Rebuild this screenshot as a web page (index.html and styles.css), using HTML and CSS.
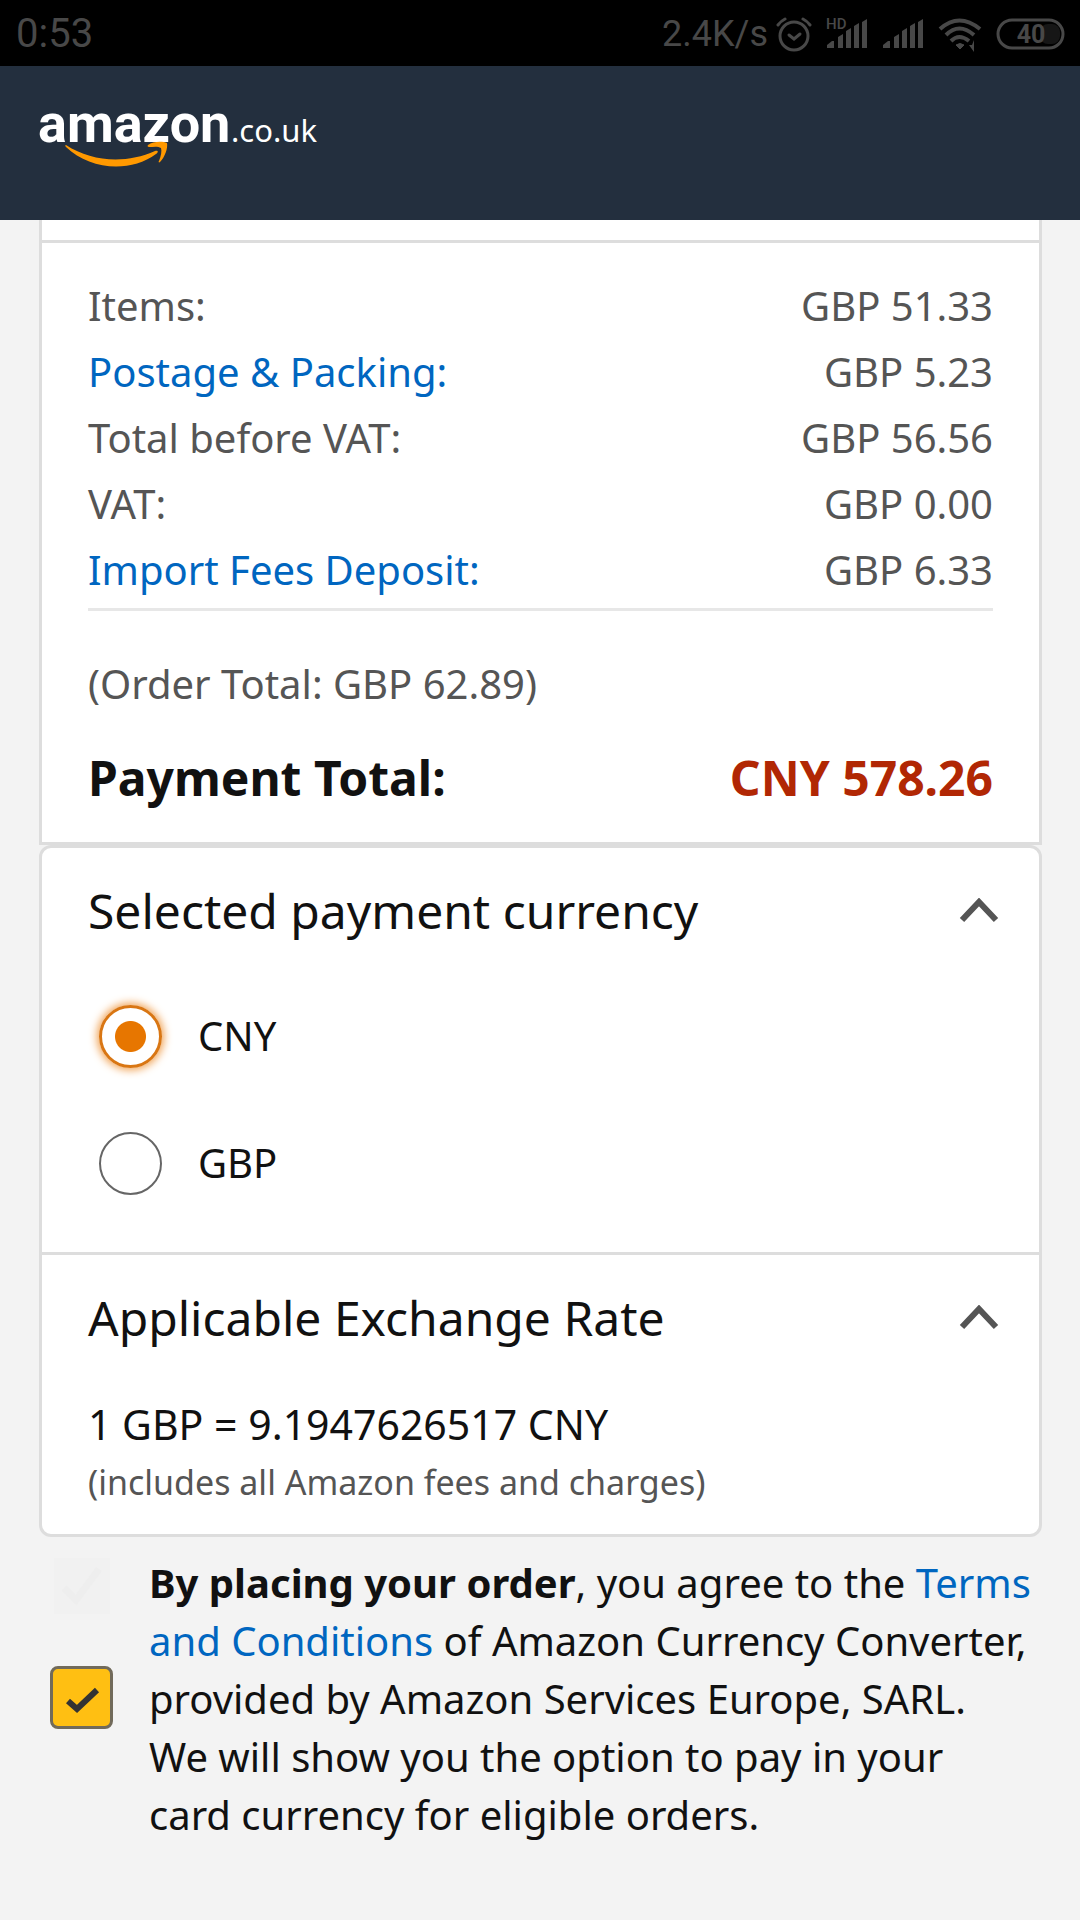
FILE: index.html
```html
<!DOCTYPE html>
<html lang="en">
<head>
<meta charset="utf-8">
<meta name="viewport" content="width=device-width, initial-scale=1">
<title>Amazon.co.uk Checkout</title>
<link rel="stylesheet" href="styles.css">
</head>
<body>
<div class="status-bar">
  <span class="clock">0:53</span>
  <div class="status-icons">
    <span class="speed">2.4K/s</span>
    <svg class="status-icon" width="36" height="36" viewBox="0 0 36 36" fill="none" stroke="currentColor" stroke-linecap="round" aria-label="Alarm">
      <circle cx="18" cy="20" r="14" stroke-width="3"/>
      <path d="M13 19l5 4 6-5" stroke-width="3"/>
      <path d="M2 9q3-4 7-6M27 3q4 2 7 6" stroke-width="3"/>
    </svg>
    <svg class="status-icon hd-signal" width="42" height="36" viewBox="0 0 42 36" fill="currentColor" aria-label="HD signal">
      <text class="hd-text" x="0" y="13">HD</text>
      <path d="M1 32v-3l5-4h2v7zM12 32V21l5-3v14zM20 32V15l5-3v20zM28 32V10l5-3v25zM36 32V6l5-3v29z"/>
    </svg>
    <svg class="status-icon" width="42" height="36" viewBox="0 0 42 36" fill="currentColor" aria-label="Signal">
      <path d="M1 32v-3l5-4h2v7zM12 32V21l5-3v14zM20 32V15l5-3v20zM28 32V10l5-3v25zM36 32V6l5-3v29z"/>
    </svg>
    <svg class="status-icon wifi" width="44" height="36" viewBox="0 0 44 36" fill="none" stroke="currentColor" stroke-width="4" aria-label="Wi-Fi">
      <path d="M2 13q19-17 40 0M8 19q13-13 28 0M13 25q8-8 18 0"/>
      <path d="M18 29q4-3 8 0l-4 4z" fill="currentColor" stroke-width="1"/>
      <path d="M31 29h3l2-5v12z" fill="currentColor" stroke="none"/>
    </svg>
    <svg class="status-icon" width="70" height="32" viewBox="0 0 70 32" aria-label="Battery 40%">
      <rect x="44" y="6" width="20" height="20" rx="8" fill="#161616"/>
      <rect x="2" y="2" width="65" height="28" rx="14" fill="none" stroke="currentColor" stroke-width="3"/>
      <text class="battery-text" x="35" y="25" text-anchor="middle">40</text>
    </svg>
  </div>
</div>

<header class="site-header">
  <a class="logo" href="#" aria-label="amazon.co.uk">
    <svg width="282" height="64" viewBox="0 0 282 64">
      <text class="logo-name" x="0" y="36">amazon</text>
      <text class="logo-domain" x="193" y="36">.co.uk</text>
      <path fill="#f90" d="M28 39C54 56 88 58 117 45c3-1 4 1 1 3C92 67 52 64 28 41c-1-1-1-2 0-2z"/>
      <path fill="#f90" d="M110 39c5-4 15-4 19-2 1 5-2 14-7 19-1 1-2 0-1-1 2-5 3-10 2-13-3-2-8-1-12-1-1 0-2-1-1-2z"/>
    </svg>
  </a>
</header>

<main class="content">
  <section class="card summary">
    <table class="costs">
      <tbody>
        <tr><th scope="row">Items:</th><td>GBP 51.33</td></tr>
        <tr><th scope="row"><a href="#">Postage &amp; Packing:</a></th><td>GBP 5.23</td></tr>
        <tr><th scope="row">Total before VAT:</th><td>GBP 56.56</td></tr>
        <tr><th scope="row">VAT:</th><td>GBP 0.00</td></tr>
        <tr><th scope="row"><a href="#">Import Fees Deposit:</a></th><td>GBP 6.33</td></tr>
      </tbody>
    </table>
    <p class="order-total">(Order Total: GBP 62.89)</p>
    <div class="payment-total"><span>Payment Total:</span><span class="price">CNY 578.26</span></div>
  </section>

  <section class="card currency">
    <div class="panel currency-panel">
      <h2 class="panel-title">
        <button class="toggle" type="button" aria-expanded="true">Selected payment currency
          <svg class="chevron" width="40" height="26" viewBox="0 0 40 26" aria-hidden="true"><path d="M3 22L20 4l17 18"/></svg>
        </button>
      </h2>
      <div class="options">
        <label class="option"><input class="radio" type="radio" name="currency" checked>CNY</label>
        <label class="option"><input class="radio" type="radio" name="currency">GBP</label>
      </div>
    </div>
    <div class="panel rate-panel">
      <h2 class="panel-title">
        <button class="toggle" type="button" aria-expanded="true">Applicable Exchange Rate
          <svg class="chevron" width="40" height="26" viewBox="0 0 40 26" aria-hidden="true"><path d="M3 22L20 4l17 18"/></svg>
        </button>
      </h2>
      <p class="rate">1 GBP = 9.1947626517 CNY</p>
      <p class="rate-note">(includes all Amazon fees and charges)</p>
    </div>
  </section>

  <div class="agreement">
    <div class="agreement-checks">
      <svg class="ghost-check" width="56" height="56" viewBox="0 0 56 56" aria-hidden="true">
        <rect width="56" height="56" fill="#f1f1f1"/>
        <path d="M10 30l12 12L45 11" fill="none" stroke="#eee" stroke-width="7"/>
      </svg>
      <span class="check-wrap">
        <input class="checkbox" type="checkbox" id="agree" checked>
        <svg class="tick" width="36" height="28" viewBox="0 0 36 28" aria-hidden="true"><path d="M4 15l9 8L33 4"/></svg>
      </span>
    </div>
    <label class="agreement-text" for="agree"><b>By placing your order</b>, you agree to the <a href="#">Terms and Conditions</a> of Amazon Currency Converter, provided by Amazon Services Europe, SARL. We will show you the option to pay in your card currency for eligible orders.</label>
  </div>
</main>
</body>
</html>
```

FILE: styles.css
```css
* {
  box-sizing: border-box;
}

body {
  margin: 0;
  background: #f3f3f3;
  color: #111;
  font-family: "Noto Sans", "Open Sans", sans-serif;
  font-size: 40px;
  line-height: 58px;
}

p,
h2 {
  margin: 0;
}

a {
  color: #0066c0;
  text-decoration: none;
}

/* Phone status bar */
.status-bar {
  display: flex;
  justify-content: space-between;
  align-items: center;
  height: 66px;
  padding: 2px 14px 0 16px;
  background: #000;
  color: #484848;
  font-family: Roboto, sans-serif;
  font-size: 40px;
  line-height: 64px;
}

.status-icons {
  display: flex;
  align-items: center;
  gap: 14px;
}

.speed {
  margin-right: -6px;
  font-size: 36px;
}

.status-icon {
  flex: none;
}

.hd-text {
  font: 500 15px Roboto, sans-serif;
}

.battery-text {
  font: 700 25px Roboto, sans-serif;
  fill: currentColor;
}

/* Site header */
.site-header {
  padding: 40px 38px 50px;
  background: #232f3e;
}

.logo {
  display: block;
  height: 64px;
}

.logo svg {
  display: block;
  overflow: visible;
}

.logo-name {
  fill: #fff;
  font: 700 54px Roboto, sans-serif;
}

.logo-domain {
  fill: #fff;
  font: 400 31px "Noto Sans", sans-serif;
}

/* Cards */
.content {
  padding: 0 38px 64px 39px;
}

.card {
  border: 3px solid #ddd;
  background: #fff;
}

.summary {
  padding: 0 46px 31px;
  border-top: 0;
  color: #555;
}

.summary::before {
  display: block;
  height: 20px;
  margin: 0 -46px 30px;
  border-bottom: 3px solid #ddd;
  content: "";
}

.costs {
  width: 100%;
  border-spacing: 0;
  border-bottom: 3px solid #e7e7e7;
  padding-bottom: 5px;
}

.costs th,
.costs td {
  padding: 0;
  font-weight: 400;
  line-height: 66px;
  text-align: left;
}

.costs td {
  text-align: right;
}

.order-total {
  padding: 44px 0 32px;
}

.payment-total {
  display: flex;
  justify-content: space-between;
  color: #111;
  font-size: 48px;
  font-weight: 700;
  line-height: 66px;
}

.price {
  color: #b12704;
}

.currency {
  border-radius: 12px;
}

.panel {
  padding: 30px 46px 23px;
}

.currency-panel {
  padding-bottom: 39px;
  border-bottom: 3px solid #ddd;
}

.panel-title {
  font-size: 48px;
  font-weight: 400;
  line-height: 66px;
}

.toggle {
  display: flex;
  justify-content: space-between;
  align-items: center;
  width: 100%;
  padding: 0;
  border: 0;
  background: none;
  color: inherit;
  font: inherit;
  text-align: left;
}

.chevron {
  margin-right: -6px;
  fill: none;
  stroke: #555;
  stroke-width: 6px;
}

.options {
  display: flex;
  flex-direction: column;
  gap: 27px;
  padding: 42px 0 0 11px;
}

.option {
  display: flex;
  align-items: center;
  gap: 36px;
  height: 100px;
}

.radio {
  appearance: none;
  width: 63px;
  height: 63px;
  margin: 0;
  border: 2px solid #666;
  border-radius: 50%;
  background: #fff;
}

.radio:checked {
  border: 3px solid #d97613;
  background: radial-gradient(circle, #e77600 15px, #fff 16px);
  box-shadow: 0 0 9px 2px #f0a050;
}

.rate {
  padding-top: 44px;
  font-size: 41px;
}

.rate-note {
  color: #555;
  font-size: 34px;
}

/* Terms agreement */
.agreement {
  display: flex;
  gap: 36px;
  padding: 17px 9px 0 11px;
}

.agreement-checks {
  display: flex;
  flex: none;
  flex-direction: column;
  align-items: center;
  gap: 52px;
  padding-top: 4px;
}

.check-wrap {
  position: relative;
  display: block;
  width: 63px;
  height: 63px;
}

.checkbox {
  appearance: none;
  display: block;
  width: 100%;
  height: 100%;
  margin: 0;
  border: 3px solid #716a5a;
  border-radius: 8px;
  background: #ffbf12;
}

.tick {
  position: absolute;
  top: 20px;
  left: 14px;
  fill: none;
  stroke: #333;
  stroke-width: 6px;
  pointer-events: none;
}
```
